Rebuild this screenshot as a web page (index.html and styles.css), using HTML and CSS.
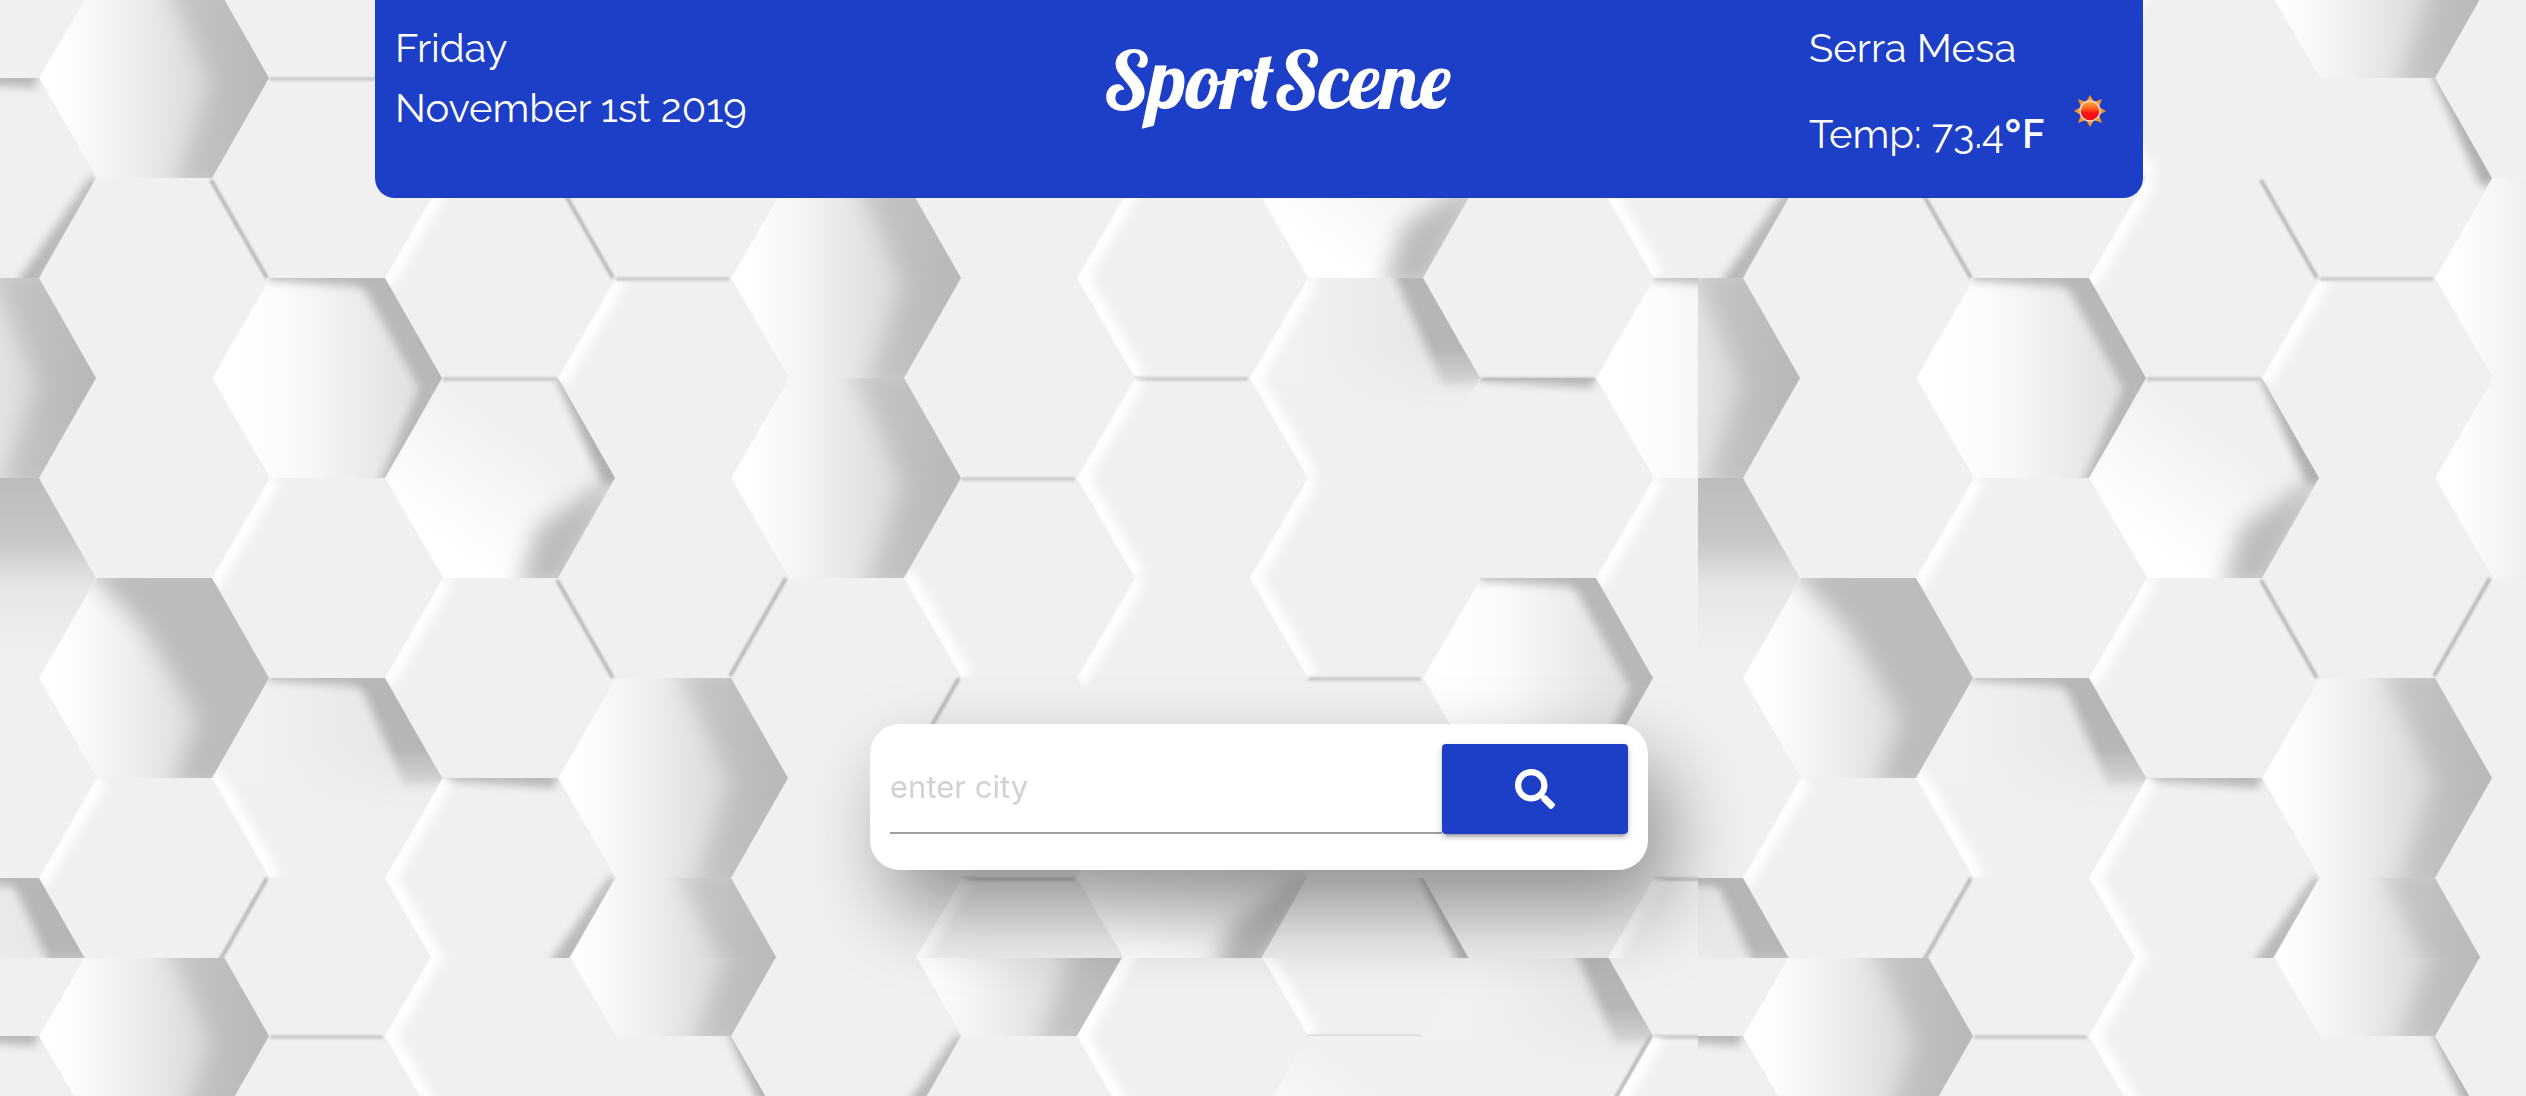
FILE: index.html
```html
<!DOCTYPE html>
<html lang="en">
<head>
<meta charset="utf-8">
<meta name="viewport" content="width=device-width, initial-scale=1">
<title>SportScene</title>
<link rel="stylesheet" href="styles.css">
</head>
<body>
<svg class="backdrop" aria-hidden="true">
  <defs>
    <filter id="soft" x="-50%" y="-50%" width="200%" height="200%"><feGaussianBlur stdDeviation="11"/></filter>
    <filter id="mid" x="-50%" y="-50%" width="200%" height="200%"><feGaussianBlur stdDeviation="5"/></filter>
    <filter id="fine" filterUnits="userSpaceOnUse" x="-130" y="-120" width="260" height="240"><feGaussianBlur stdDeviation="1"/></filter>
    <linearGradient id="bowl"><stop offset=".08" stop-color="#fff"/><stop offset=".3" stop-color="#f4f4f4"/><stop offset=".65" stop-color="#dedede"/><stop offset="1" stop-color="#c4c4c4"/></linearGradient>
    <linearGradient id="pale"><stop offset=".1" stop-color="#fff"/><stop offset=".35" stop-color="#fafafa"/><stop offset=".85" stop-color="#e2e2e2"/></linearGradient>
    <linearGradient id="palelow" x1=".15" y1=".95" x2=".65" y2=".35"><stop offset=".2" stop-color="#fff"/><stop offset="1" stop-color="#f0f0f0"/></linearGradient>
    <linearGradient id="dim"><stop offset=".2" stop-color="#f1f1f1"/><stop offset=".8" stop-color="#e6e6e6"/></linearGradient>
    <linearGradient id="dimdown" x2="0" y2="1"><stop offset=".35" stop-color="#f0f0f0" stop-opacity="0"/><stop offset=".7" stop-color="#f0f0f0"/></linearGradient>
    <linearGradient id="wedge"><stop offset="0" stop-color="#c8c8c8"/><stop offset="1" stop-color="#b4b4b4"/></linearGradient>
    <linearGradient id="fade" x2="0" y2="1"><stop offset="0" stop-color="#bcbcbc"/><stop offset=".3" stop-color="#c6c6c6"/><stop offset=".55" stop-color="#e6e6e6"/><stop offset=".9" stop-color="#f0f0f0"/></linearGradient>
    <path id="hex" d="M-115 0L-57-100H58L115 0L58 100H-57Z"/>
    <clipPath id="cell"><use href="#hex"/></clipPath>

    <g id="deep" clip-path="url(#cell)">
      <use href="#hex" fill="url(#bowl)"/>
      <path d="M5-110H70L130 0L70 110H20L58 5Z" fill="url(#wedge)" filter="url(#soft)"/>
    </g>
    <g id="dark" clip-path="url(#cell)">
      <use href="#hex" fill="url(#bowl)"/>
      <path d="M-75-115H75L130 0L70 110H20L45 40L-10-50Z" fill="#bcbcbc" filter="url(#soft)"/>
    </g>
    <g id="white" clip-path="url(#cell)">
      <use href="#hex" fill="url(#pale)"/>
      <path d="M26-110H70L130 0L70 110H50L92 10Z" fill="#b8b8b8" filter="url(#mid)"/>
    </g>
    <g id="slope" clip-path="url(#cell)">
      <use href="#hex" fill="url(#dim)"/>
      <path d="M26-110H70L125 5L78 8Z" fill="#b6b6b6" filter="url(#mid)"/>
      <use href="#hex" fill="url(#dimdown)"/>
    </g>
    <g id="rim" clip-path="url(#cell)"><path d="M52-110H70L125 5L104 8Z" fill="#b0b0b0" filter="url(#mid)"/></g>
    <g id="lower" clip-path="url(#cell)">
      <use href="#hex" fill="url(#palelow)"/>
      <path d="M125-10L65 110H18L38 48Z" fill="#bcbcbc" filter="url(#soft)"/>
    </g>
    <g id="sink" clip-path="url(#cell)"><use href="#hex" fill="url(#fade)"/></g>
    <g id="top" clip-path="url(#cell)"><path d="M-60-114H60L54-90L-60-98Z" fill="#b8b8b8" filter="url(#mid)"/></g>
    <g id="side" clip-path="url(#cell)"><path d="M115 0L56 104H42Z" fill="#b4b4b4" stroke="#b8b8b8" stroke-width="10" filter="url(#mid)"/></g>
    <path id="ur" d="M57-98L113 0" stroke="#bcbcbc" stroke-width="4" fill="none" filter="url(#fine)"/>
    <path id="lr" d="M113 0L57 98" stroke="#bcbcbc" stroke-width="4" fill="none" filter="url(#fine)"/>
    <path id="base" d="M-57 101H56" stroke="#ccc" stroke-width="4" fill="none" filter="url(#fine)"/>
    <g id="ul" clip-path="url(#cell)"><path d="M-115 4L-55-100" stroke="#fff" stroke-width="18" fill="none" filter="url(#mid)"/></g>
    <g id="ll" clip-path="url(#cell)"><path d="M-115-4L-55 100" stroke="#fff" stroke-width="18" fill="none" filter="url(#mid)"/></g>

    <pattern id="tile" x="-6" width="1704" height="958" patternUnits="userSpaceOnUse">
      <rect width="1704" height="958" fill="#f0f0f0"/>
      <g transform="translate(6)">
      <use href="#top" x="-19" y="178"/><use href="#side" x="-19" y="178"/>
      <use href="#deep" x="-19" y="378"/>
      <use href="#sink" x="-19" y="578"/>
      <use href="#slope" x="-19" y="978"/><use href="#top" x="-19" y="978"/>

      <use href="#deep" x="154" y="78"/>
      <use href="#ur" x="154" y="278"/>
      <use href="#dark" x="154" y="678"/>
      <use href="#ul" x="154" y="878"/><use href="#lr" x="154" y="878"/>

      <use href="#base" x="327" y="-22"/>
      <use href="#white" x="327" y="378"/><use href="#top" x="327" y="378"/>
      <use href="#ul" x="327" y="578"/>
      <use href="#slope" x="327" y="778"/><use href="#top" x="327" y="778"/><use href="#ll" x="327" y="778"/>

      <use href="#ul" x="500" y="78"/><use href="#ll" x="500" y="78"/>
      <use href="#ul" x="500" y="278"/><use href="#ur" x="500" y="278"/>
      <use href="#lower" x="500" y="478"/><use href="#rim" x="500" y="478"/><use href="#base" x="500" y="278"/>
      <use href="#ul" x="500" y="678"/><use href="#ur" x="500" y="678"/>
      <use href="#top" x="500" y="878"/><use href="#ul" x="500" y="878"/><use href="#ll" x="500" y="878"/><use href="#side" x="500" y="878"/>

      <use href="#deep" x="673" y="-22"/>
      <use href="#rim" x="673" y="178"/>
      <use href="#ul" x="673" y="378"/><use href="#base" x="673" y="178"/>
      <use href="#lr" x="673" y="578"/>
      <use href="#deep" x="673" y="778"/>
      <use href="#deep" x="673" y="978"/>

      <use href="#side" x="846" y="78"/>
      <use href="#deep" x="846" y="278"/>
      <use href="#deep" x="846" y="478"/>
      <use href="#lr" x="846" y="678"/>

      <use href="#deep" x="1019" y="-22"/>
      <use href="#base" x="1019" y="378"/>
      <use href="#ll" x="1019" y="578"/>
      <use href="#base" x="1019" y="778"/><use href="#ul" x="1019" y="978"/>

      <use href="#ll" x="1192" y="78"/><use href="#ul" x="1192" y="78"/>
      <use href="#ul" x="1192" y="278"/><use href="#ll" x="1192" y="278"/><use href="#base" x="1192" y="278"/>
      <use href="#ul" x="1192" y="478"/><use href="#ll" x="1192" y="478"/>
      <use href="#ul" x="1192" y="678"/>
      <use href="#lower" x="1192" y="878"/>

      <use href="#ll" x="1365" y="-22"/><use href="#base" x="1365" y="-22"/>
      <use href="#lower" x="1365" y="178"/>
      <use href="#slope" x="1365" y="378"/><use href="#ul" x="1365" y="378"/><use href="#ll" x="1365" y="378"/>
      <use href="#ul" x="1365" y="578"/><use href="#ll" x="1365" y="578"/><use href="#base" x="1365" y="578"/>
      <use href="#rim" x="1365" y="978"/>

      <use href="#slope" x="1538" y="78"/><use href="#lr" x="1538" y="78"/>
      <use href="#base" x="1538" y="278"/>
      <use href="#top" x="1538" y="478"/>
      <use href="#white" x="1538" y="678"/><use href="#top" x="1538" y="678"/>

      <use href="#base" x="1711" y="-22"/>
      <use href="#ul" x="1711" y="178"/><use href="#ll" x="1711" y="178"/>
      <use href="#white" x="1711" y="378"/><use href="#top" x="1711" y="378"/>
      <use href="#ul" x="1711" y="578"/>
      <use href="#base" x="1711" y="778"/><use href="#ul" x="1711" y="978"/>
      </g>
    </pattern>
  </defs>
  <rect width="100%" height="100%" fill="url(#tile)"/>
</svg>

<div class="page">
  <header class="banner">
    <div class="date">
      <p class="line">Friday</p>
      <p class="line">November 1st 2019</p>
    </div>
    <h1 class="logo">SportScene</h1>
    <div class="weather">
      <p class="line">Serra Mesa</p>
      <div class="reading">
        <p class="line">Temp: 73.4<span class="unit">°F</span></p>
        <svg class="sun" viewBox="0 0 32 69" role="img" aria-label="Sunny">
          <defs><linearGradient id="glow" x2="0" y2="1"><stop offset="0" stop-color="#ffb347"/><stop offset=".4" stop-color="#ff5a1c"/><stop offset=".6" stop-color="#fb0f16"/></linearGradient></defs>
          <path fill="#f7952d" d="M16 0l4 7 8-3-3 8 7 4-7 4 3 8-8-3-4 7-4-7-8 3 3-8-7-4 7-4-3-8 8 3z"/>
          <circle cx="16" cy="16" r="10" fill="url(#glow)" stroke="#fbdcc0" stroke-width="1.5"/>
        </svg>
      </div>
    </div>
  </header>

  <main>
    <form class="search">
      <input class="city" type="text" placeholder="enter city" aria-label="City">
      <button class="go" type="submit" aria-label="Search">
        <svg class="glass" viewBox="0 0 512 512" aria-hidden="true"><path fill="currentColor" d="M505 442.700L405.300 343c-4.500-4.500-10.600-7-17-7H372c27.600-35.300 44-79.700 44-128C416 93.100 322.900 0 208 0S0 93.100 0 208s93.100 208 208 208c48.300 0 92.700-16.400 128-44v16.300c0 6.400 2.500 12.500 7 17l99.700 99.700c9.400 9.400 24.600 9.400 33.900 0l28.300-28.300c9.400-9.400 9.400-24.600.1-34zM208 336c-70.700 0-128-57.200-128-128 0-70.700 57.200-128 128-128 70.700 0 128 57.200 128 128 0 70.700-57.200 128-128 128z"/></svg>
      </button>
    </form>
  </main>
</div>
</body>
</html>
```
FILE: styles.css
```css
* {
  box-sizing: border-box;
}

body {
  margin: 0;
  background: #f0f0f0;
  font-family: Raleway, Lato, sans-serif;
}

.backdrop {
  position: fixed;
  inset: 0;
  z-index: -1;
  width: 100%;
  height: 100%;
}

.page {
  display: flex;
  flex-direction: column;
  align-items: center;
  gap: 48vh;
  min-height: 100vh;
  padding-right: 8px;
}

.banner {
  display: grid;
  grid-template-columns: 1fr auto 1fr;
  width: 70vw;
  padding: 18px 20px 34px;
  border-radius: 0 0 20px 20px;
  background: #1d3ec6;
  color: #fff;
}

.line {
  margin: 0;
  font-size: 40px;
  font-weight: 400;
  line-height: 60px;
  white-space: nowrap;
}

.unit {
  font-family: Inter, sans-serif;
  font-weight: 500;
}

.logo {
  margin: 0;
  padding-left: 36px;
  font: 80px/122px Lobster, "Liberation Serif", serif;
}

.weather {
  display: flex;
  flex-direction: column;
  gap: 17px;
  width: 314px;
  justify-self: end;
}

.reading {
  display: flex;
  align-items: flex-end;
  gap: 28px;
}

.sun {
  flex: none;
  width: 32px;
  height: 69px;
}

main {
  display: flex;
  justify-content: center;
  width: 70vw;
}

.search {
  display: flex;
  width: 44%;
  padding: 20px 20px 36px;
  border-radius: 30px;
  background: #fff;
  box-shadow: 20px 40px 80px rgba(0, 0, 0, .4);
}

.city {
  flex: 1;
  min-width: 0;
  height: 90px;
  padding: 0 0 4px;
  border: 0;
  border-bottom: 2px solid #9e9e9e;
  background: none;
  color: #333;
  font: 31px Inter, sans-serif;
  outline: none;
}

.city::placeholder {
  color: #d1d1d1;
}

.go {
  display: grid;
  place-items: center;
  width: 186px;
  height: 90px;
  padding: 0;
  border: 0;
  border-radius: 4px;
  background: #1d3ec6;
  color: #fff;
  box-shadow: 0 4px 4px rgba(0, 0, 0, .14), 0 2px 10px rgba(0, 0, 0, .12), 0 6px 2px -4px rgba(0, 0, 0, .2);
}

.glass {
  width: 40px;
  height: 40px;
}
```
